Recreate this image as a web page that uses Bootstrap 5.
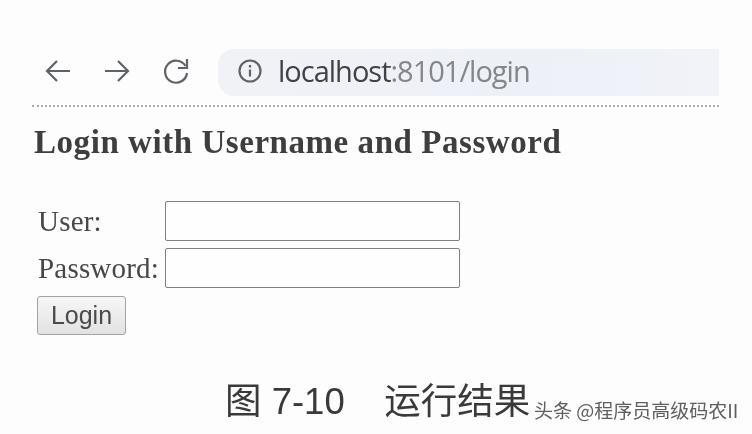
<!DOCTYPE html>
<html lang="zh-CN">

<head>
    <meta charset="UTF-8">
    <title>Login</title>
    <meta name="viewport" content="width=device-width,initial-scale=1">
    <link href="https://cdn.jsdelivr.net/npm/bootstrap@5.3.3/dist/css/bootstrap.min.css" rel="stylesheet">
    <style>
        html, body { height: 100%; }
        body { background: #fdfdfd; overflow: hidden; }
        .shot { height: 434px; padding: 49px 33px 0 32px; filter: blur(.4px); }
        .tool-row { height: 47px; padding-left: 11px; }
        .tool-btn { width: 30px; height: 30px; color: #5f6368; margin: 0 29px 4px 0; flex: none; }
        .tool-btn:last-of-type { margin-right: 27px; }
        .addr-bar { height: 47px; padding: 0 0 4px 20px; border-radius: 16px 0 0 16px;
            background: linear-gradient(90deg, #f1f2f6 0%, #eef0f8 60%, #f1f3f9 100%);
            font: 29px "Open Sans", "Noto Sans", sans-serif; letter-spacing: -1px; color: #3f4246; }
        .addr-bar span { color: #83868b; }
        .addr-icon { width: 24px; height: 24px; margin-right: 16px; flex: none; }
        .rule-dots { border-top: 2px dotted #a9a9a9; margin-top: 9px; }
        .page-title { font: bold 33px "Liberation Serif", serif; color: #3e3e3e; letter-spacing: .55px;
            margin: 16px 0 0 2px; line-height: 38px; }
        .login-form { margin: 40px 0 0 6px; font: 29px "Liberation Serif", serif; color: #474747; letter-spacing: .2px; }
        .form-line { height: 40px; margin-bottom: 7px; }
        .form-line label { width: 127px; flex: none; }
        .form-box { width: 295px; height: 40px; border: 1px solid #808080; border-radius: 2px; background: #fefefe; }
        .login-btn { width: 89px; height: 39px; padding: 0; border: 1px solid #a3a3a3; border-radius: 3px;
            background: linear-gradient(#f6f6f6, #e2e2e2); color: #4a4a4a;
            font: 25px "Liberation Sans", sans-serif; margin: 8px 0 0 -1px; }
        .caption-row { margin-top: 45px; margin-left: 193px; color: #3a3a3a; white-space: nowrap; }
        .caption-text { font: 36.5px "Liberation Sans", "Noto Sans CJK SC", sans-serif; width: 309px; flex: none; line-height: 44px; }
        .caption-gap { margin-left: 3px; }
        .mark-text { font: 19px "Noto Sans CJK SC", sans-serif; color: #5f5f5f; margin-top: 16px; }
    </style>
</head>

<body>
    <div class="shot">
        <div class="tool-row d-flex align-items-center">
            <svg class="tool-btn" viewBox="0 0 30 30" fill="none" stroke="currentColor" stroke-width="2.2">
                <path d="M27 15H4M14 5 4 15l10 10" />
            </svg>
            <svg class="tool-btn" viewBox="0 0 30 30" fill="none" stroke="currentColor" stroke-width="2.2">
                <path d="M3 15h23M16 5l10 10-10 10" />
            </svg>
            <svg class="tool-btn" viewBox="0 0 30 30" fill="none" stroke="currentColor" stroke-width="2.2">
                <path d="M24.5 10A11 11 0 1 0 26 17" />
                <path d="M26 3v9h-9" />
            </svg>
            <div class="addr-bar flex-grow-1 d-flex align-items-center">
                <svg class="addr-icon" viewBox="0 0 24 24" fill="none" stroke="#5f6368" stroke-width="2.2">
                    <circle cx="12" cy="12" r="10.5" />
                    <path d="M12 10.5v7M12 6v2.5" />
                </svg>
                localhost<span>:8101/login</span>
            </div>
        </div>
        <div class="rule-dots"></div>
        <h1 class="page-title">Login with Username and Password</h1>
        <form class="login-form">
            <div class="form-line d-flex align-items-center">
                <label>User:</label>
                <div class="form-box"></div>
            </div>
            <div class="form-line d-flex align-items-center">
                <label>Password:</label>
                <div class="form-box"></div>
            </div>
            <button type="button" class="login-btn d-block">Login</button>
        </form>
        <div class="caption-row d-flex">
            <div class="caption-text">图 7-10　<span class="caption-gap">运行结果</span></div>
            <div class="mark-text">头条 @程序员高级码农II</div>
        </div>
    </div>
    <script src="https://cdn.jsdelivr.net/npm/bootstrap@5.3.3/dist/js/bootstrap.bundle.min.js"></script>
</body>

</html>
